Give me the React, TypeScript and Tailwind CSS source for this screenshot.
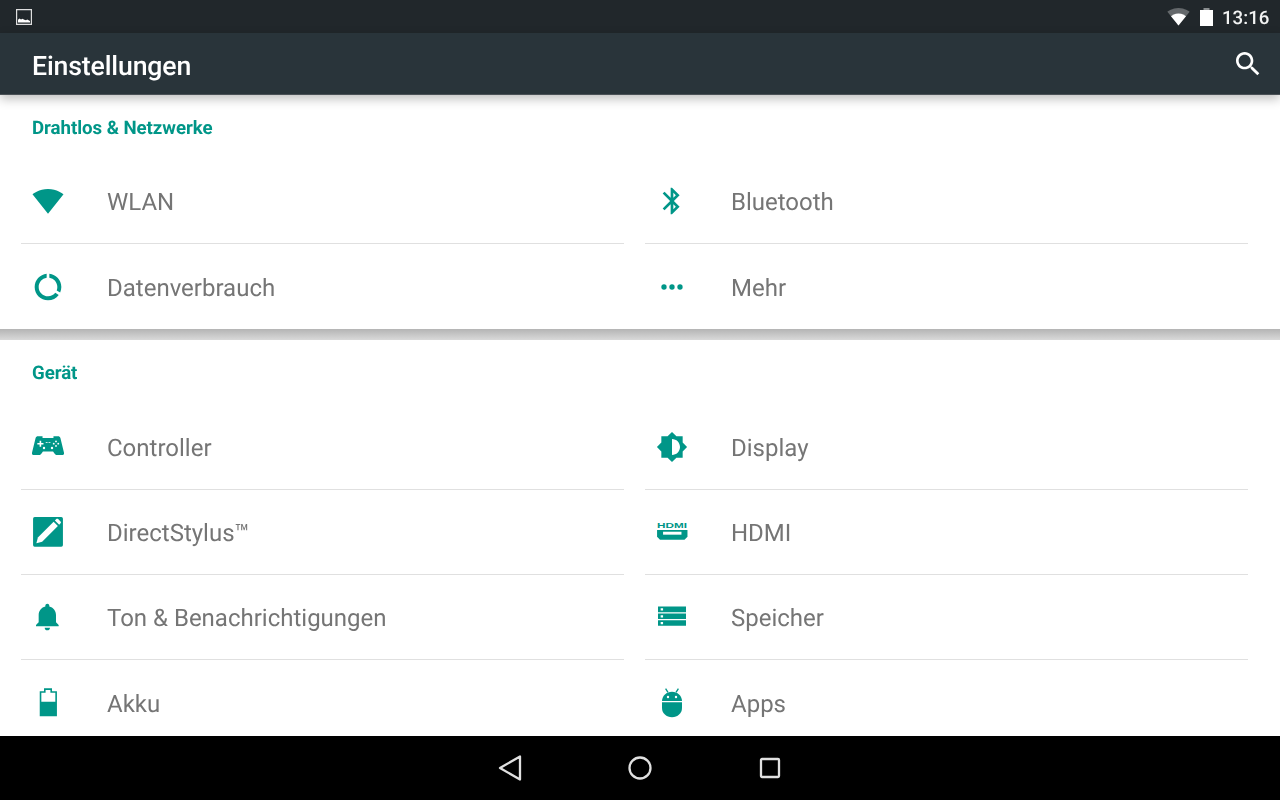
import React from "react";

const teal = "#009688";

function Ic({ children }: { children: React.ReactNode }) {
  return (
    <svg viewBox="0 0 24 24" width="32" height="32" fill={teal} className="shrink-0">
      {children}
    </svg>
  );
}

const icons: Record<string, React.ReactNode> = {
  wifi: <path d="M12.01 21.49L23.64 7c-.45-.34-4.93-4-11.64-4C5.28 3 .81 6.66.36 7l11.64 14.5.01-.01z" />,
  bt: (
    <path d="M17.71 7.71L12 2h-1v7.59L6.41 5 5 6.41 10.59 12 5 17.59 6.41 19 11 14.41V22h1l5.71-5.71-4.3-4.29 4.3-4.29zM13 5.83l1.88 1.88L13 9.59V5.83zm1.88 10.46L13 18.17v-3.76l1.88 1.88z" />
  ),
  data: (
    <path d="M13 2.05v3.03c3.39.49 6 3.39 6 6.92 0 .9-.18 1.75-.48 2.54l2.6 1.53c.56-1.24.88-2.62.88-4.07 0-5.18-3.95-9.45-9-9.95zM12 19c-3.87 0-7-3.13-7-7 0-3.53 2.61-6.43 6-6.92V2.05c-5.06.5-9 4.76-9 9.95 0 5.52 4.47 10 9.99 10 3.31 0 6.24-1.61 8.06-4.09l-2.6-1.53C16.17 17.98 14.21 19 12 19z" />
  ),
  more: (
    <>
      <circle cx="6" cy="12" r="2" />
      <circle cx="12" cy="12" r="2" />
      <circle cx="18" cy="12" r="2" />
    </>
  ),
  pad: (
    <>
      <path d="M4.500 4h3.400v1.200h8.200V4h3.400c.9 0 1.500.5 1.800 1.300L24 16.300c.2 1-.4 1.700-1.200 1.700h-4c-.8 0-1.300-.3-1.800-1l-1.200-1.700H8.200L7 17c-.5.7-1 1-1.800 1h-4C.4 18-.2 17.300 0 16.300L2.700 5.300C3 4.500 3.600 4 4.500 4z" />
      <g fill="#fff">
        <path d="M5.700 7.300h1.200v1.700h1.700v1.200H6.900v1.700H5.700v-1.700H4V9h1.700z" />
        <rect x="10.300" y="8.300" width="1.400" height=".6" />
        <rect x="12.400" y="8.300" width="1.400" height=".6" />
        <circle cx="18" cy="7.800" r=".7" />
        <circle cx="18" cy="11.200" r=".7" />
        <circle cx="16.300" cy="9.500" r=".7" />
        <circle cx="19.700" cy="9.500" r=".7" />
        <circle cx="9" cy="12.800" r=".9" />
        <circle cx="15" cy="12.800" r=".9" />
      </g>
    </>
  ),
  display: (
    <path d="M20 15.31L23.31 12 20 8.69V4h-4.69L12 .69 8.69 4H4v4.69L.69 12 4 15.31V20h4.69L12 23.31 15.31 20H20v-4.69zM12 18V6c3.31 0 6 2.69 6 6s-2.69 6-6 6z" />
  ),
  stylus: (
    <>
      <rect x=".8" y=".8" width="22.400" height="22.200" rx="1.200" />
      <path fill="#fff" d="M3.300 20.400l1.100-4.300L16.200 4.300l3.200 3.200L7.600 19.300z" />
      <path fill="#fff" d="M17.200 3.300l1-1c.4-.4 1-.4 1.400 0l1.800 1.800c.4.4.4 1 0 1.400l-1 1z" />
    </>
  ),
  hdmi: (
    <>
      <text
        x="12"
        y="9"
        textAnchor="middle"
        fontSize="5"
        fontWeight="700"
        fontFamily="'Liberation Sans', sans-serif"
        textLength="22.500"
        lengthAdjust="spacingAndGlyphs"
        fill={teal}
      >
        HDMI
      </text>
      <path d="M.8 10.500h22.800v5l-2.200 2.300H3l-2.200-2.300z" />
      <rect x="5.300" y="11.800" width="13.800" height="2.200" fill="#fff" />
    </>
  ),
  bell: (
    <path d="M11.500 22c1.100 0 2-.9 2-2h-4c0 1.100.9 2 2 2zm6.500-6v-5.500c0-3.070-2.130-5.640-5-6.320V3.500c0-.83-.67-1.500-1.500-1.500S10 2.670 10 3.500v.68c-2.870.68-5 3.250-5 6.320V16l-2 2v1h17v-1l-2-2z" />
  ),
  storage: (
    <path
      fillRule="evenodd"
      d="M1.500 4.200h21v4.200h-21zM3.500 5.500h1.800v1.700H3.500zM1.500 9.300h21v4.200h-21zM3.500 10.600h1.800v1.700H3.500zM1.500 14.400h21v4.200h-21zM3.500 15.700h1.800v1.700H3.500z"
    />
  ),
  battery: (
    <path
      fillRule="evenodd"
      d="M9 1h6v2.200h3.700V22H5.800V3.200H9zM7 4.300v6.700h10.500V4.300h-3.700V2.200h-3.600v2.100z"
    />
  ),
  android: (
    <>
      <path d="M4.500 10.500c0-4 3.400-7 7.500-7s7.500 3 7.500 7z" />
      <path d="M4.500 11.500h15v4.200c0 4-3.300 6.900-7.500 6.900s-7.500-2.900-7.500-6.900z" />
      <path d="M7.200 1.200L9 4M16.800 1.200L15 4" stroke={teal} strokeWidth="1" fill="none" />
      <circle cx="9" cy="7.500" r=".9" fill="#fff" />
      <circle cx="15" cy="7.500" r=".9" fill="#fff" />
    </>
  ),
};

function Row({ icon, label, tall, line = true }: { icon: string; label: string; tall?: boolean; line?: boolean }) {
  return (
    <div
      className={`flex items-center pl-[11px] ${tall ? "h-[86px]" : "h-[85px]"} ${
        line ? "border-b border-[#e0e0e0]" : ""
      }`}
    >
      <Ic>{icons[icon]}</Ic>
      <span className="ml-[42.5px] pt-[2px] text-[24px] leading-none text-[#757575] [text-rendering:geometricPrecision] [will-change:transform]">
        {label}
      </span>
    </div>
  );
}

export default function App() {
  return (
    <div
      className="flex h-[800px] w-[1280px] flex-col overflow-hidden bg-white"
      style={{ fontFamily: "Roboto, sans-serif" }}
    >
      <div className="flex h-[33px] shrink-0 items-center justify-between bg-[#21272b] pl-[16px] pr-[11px]">
        <svg viewBox="0 0 16 16" width="16" height="16" className="mt-[1px]">
          <path fill="#fff" fillRule="evenodd" d="M0 0h16v16H0zM1.200 1.200v13.600h13.600V1.200z" opacity=".85" />
          <path fill="#fff" d="M2 13.500V10.800l1.500-1.200 1.500 1 1.500-.8 1.800 1 1.700.4 1.200-.6 2.800 1.300v1.600z" />
        </svg>
        <div className="flex items-center">
          <svg viewBox="0 0 24 24" width="23" height="23" className="mr-[10px]">
            <path fill="#fff" opacity=".3" d="M12.010 21.490L23.640 7c-.45-.34-4.930-4-11.640-4C5.280 3 .81 6.660.36 7l11.640 14.500.01-.01z" />
            <path fill="#fff" d="M12 21.500L19.800 11.800C18.700 10.900 15.900 8.800 12 8.800s-6.700 2.100-7.800 3z" />
          </svg>
          <svg viewBox="0 0 13 18" width="13" height="18" className="mr-[9px]">
            <rect x="3.500" y="0" width="6" height="2" fill="#8a8e90" />
            <rect x="0" y="2" width="13" height="16" fill="#fff" />
          </svg>
          <span className="pt-[4px] text-[18.67px] font-medium leading-none text-[#f2f3f3] [text-rendering:geometricPrecision] [will-change:transform]">
            13:16
          </span>
        </div>
      </div>

      <div className="relative z-10 flex h-[62px] shrink-0 items-center justify-between border-b border-[#4a5156] bg-[#29343a] pl-[32px] pr-[16px] shadow-[0_4px_10px_rgba(0,0,0,0.25)]">
        <span className="pt-[5px] text-[26.67px] font-medium leading-none tracking-[-0.15px] text-white [text-rendering:geometricPrecision] [will-change:transform]">
          Einstellungen
        </span>
        <svg viewBox="0 0 24 24" width="32" height="32" fill="#fff">
          <path d="M15.500 14h-.79l-.28-.27C15.410 12.590 16 11.110 16 9.500 16 5.910 13.090 3 9.500 3S3 5.910 3 9.500 5.910 16 9.500 16c1.610 0 3.090-.59 4.230-1.570l.27.28v.79l5 4.990L20.490 19l-4.990-5zm-6 0C7.010 14 5 11.990 5 9.500S7.010 5 9.500 5 14 7.010 14 9.500 11.990 14 9.500 14z" />
        </svg>
      </div>

      <div className="min-h-0 flex-1 overflow-hidden">
        <div className="flex h-[63px] items-center pl-[32px] pt-[4px]">
          <span className="text-[18.67px] font-bold leading-none tracking-[-0.05px] text-[#009688] [text-rendering:geometricPrecision] [will-change:transform]">
            Drahtlos &amp; Netzwerke
          </span>
        </div>
        <div className="grid grid-cols-2 gap-x-[21px] pl-[21px] pr-[32px]">
          <Row icon="wifi" label="WLAN" tall />
          <Row icon="bt" label="Bluetooth" tall />
          <Row icon="data" label="Datenverbrauch" line={false} />
          <Row icon="more" label="Mehr" line={false} />
        </div>
        <div className="h-[11px] bg-gradient-to-b from-[#b4b4b4] to-[#d9d9d9]" />
        <div className="flex h-[64px] items-center pl-[32px] pt-[3px]">
          <span className="text-[18.67px] font-bold leading-none tracking-[-0.05px] text-[#009688] [text-rendering:geometricPrecision] [will-change:transform]">
            Gerät
          </span>
        </div>
        <div className="grid grid-cols-2 gap-x-[21px] pl-[21px] pr-[32px]">
          <Row icon="pad" label="Controller" tall />
          <Row icon="display" label="Display" tall />
          <Row icon="stylus" label="DirectStylus™" />
          <Row icon="hdmi" label="HDMI" />
          <Row icon="bell" label="Ton & Benachrichtigungen" />
          <Row icon="storage" label="Speicher" />
          <Row icon="battery" label="Akku" line={false} />
          <Row icon="android" label="Apps" line={false} />
        </div>
      </div>

      <div className="flex h-[64px] shrink-0 items-center justify-center bg-black">
        <div className="flex w-[130px] justify-center">
          <svg viewBox="0 0 26 28" width="26" height="28" fill="none" stroke="#e0e0e0" strokeWidth="2.300" strokeLinejoin="round">
            <path d="M23 2.500v23L3 14z" />
          </svg>
        </div>
        <div className="flex w-[130px] justify-center">
          <svg viewBox="0 0 24 24" width="24" height="24" fill="none" stroke="#e0e0e0" strokeWidth="2.300">
            <circle cx="12" cy="12" r="10.500" />
          </svg>
        </div>
        <div className="flex w-[130px] justify-center">
          <svg viewBox="0 0 22 22" width="22" height="22" fill="none" stroke="#e0e0e0" strokeWidth="2.300" strokeLinejoin="round">
            <rect x="2" y="2" width="18" height="18" rx="1" />
          </svg>
        </div>
      </div>
    </div>
  );
}
